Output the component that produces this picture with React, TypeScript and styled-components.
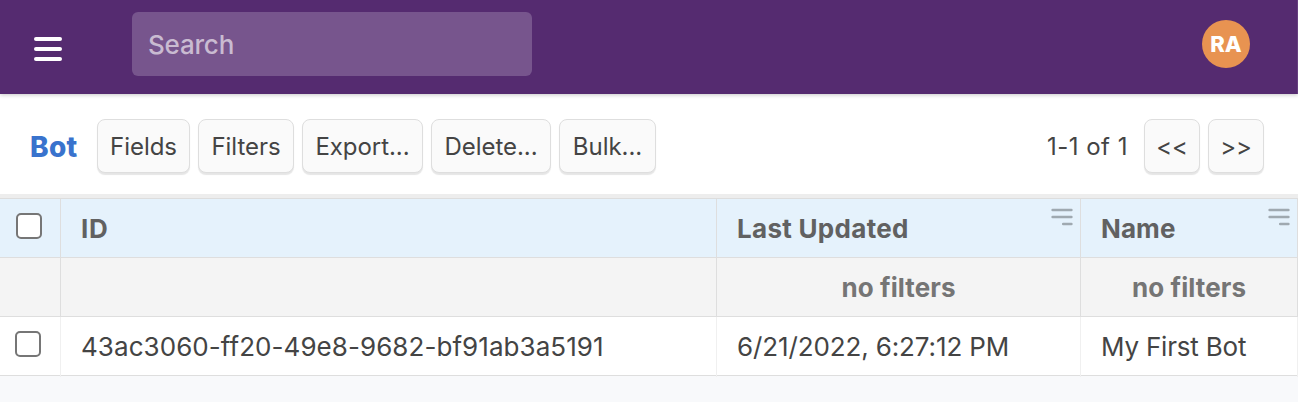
import React from "react";
import styled, { createGlobalStyle } from "styled-components";

const GlobalStyle = createGlobalStyle`
  * { box-sizing: border-box; }
  body {
    margin: 0;
    background: #f8f9fb;
    color: #444;
    font-family: Inter, "Liberation Sans", sans-serif;
    -webkit-font-smoothing: antialiased;
    overflow: hidden;
  }
`;

const Page = styled.div`
  width: 1298px;
  height: 402px;
  display: flex;
  flex-direction: column;
`;

const Header = styled.header`
  height: 94px;
  flex: none;
  display: flex;
  align-items: flex-start;
  background: #552b70;
  border-right: 1px solid #663f7f;
  padding: 12px 47px 0 34px;
  position: relative;
  box-shadow: 0 1px 4px rgba(0, 0, 0, 0.22);
`;

const MenuButton = styled.button`
  width: 28px;
  height: 24px;
  margin: 25px 70px 0 0;
  padding: 0;
  border: 0;
  background: none;
  display: flex;
  flex-direction: column;
  justify-content: space-between;
`;

const MenuBar = styled.span`
  width: 28px;
  height: 4px;
  border-radius: 2px;
  background: #fff;
`;

const SearchInput = styled.input`
  width: 400px;
  height: 64px;
  padding: 0 16px;
  border: 0;
  border-radius: 6px;
  background: #77558d;
  color: #fff;
  font: 450 26px Inter, sans-serif;
  letter-spacing: -0.2px;
  &::placeholder { color: #c9bbd1; opacity: 1; }
`;

const Avatar = styled.div`
  width: 48px;
  height: 48px;
  margin: 8px 0 0 auto;
  border-radius: 50%;
  background: #e89351;
  color: #fff;
  font-size: 22px;
  font-weight: 800;
  line-height: 48px;
  text-align: center;
`;

const Toolbar = styled.div`
  height: 104px;
  flex: none;
  display: flex;
  align-items: flex-start;
  gap: 8px;
  padding: 25px 34px 0 30px;
  background: #fff;
  border-bottom: 4px solid #ededed;
`;

const Title = styled.h1`
  width: 59px;
  margin: 0;
  color: #3973cd;
  font-size: 28px;
  font-weight: 800;
  letter-spacing: 0.3px;
  line-height: 57px;
`;

const ToolButton = styled.button<{ $width: number }>`
  width: ${(p) => p.$width}px;
  height: 54px;
  padding: 1px 0 0;
  border: 1px solid #dedede;
  border-radius: 8px;
  background: #fafafa;
  box-shadow: 0 2px 1px rgba(0, 0, 0, 0.1);
  color: #444;
  font: 430 24px/52px Inter, sans-serif;
  letter-spacing: -0.05px;
  white-space: nowrap;
`;

const PageCount = styled.span`
  margin: 0 8px 0 auto;
  font-size: 24px;
  font-weight: 430;
  letter-spacing: 0.5px;
  line-height: 56px;
`;

const Grid = styled.div`
  border-top: 1px solid #ddd;
`;

const Row = styled.div<{ $kind: "head" | "filter" | "body" }>`
  display: grid;
  grid-template-columns: 61px 656px 364px 217px;
  height: 59px;
  border-bottom: 1px solid #dedede;
  background: ${(p) => ({ head: "#e5f2fc", filter: "#f4f4f4", body: "#fff" })[p.$kind]};
  color: ${(p) => ({ head: "#616161", filter: "#757575", body: "#444" })[p.$kind]};
  font-size: 26px;
  font-weight: ${(p) => (p.$kind === "body" ? 430 : 730)};
  line-height: 60px;
  & > div { border-right: 1px solid ${(p) => (p.$kind === "body" ? "#f0f0f0" : "#dedede")}; }
`;

const Cell = styled.div<{ $center?: boolean; $spacing?: number }>`
  display: flex;
  justify-content: ${(p) => (p.$center ? "center" : "space-between")};
  padding: 0 ${(p) => (p.$center ? 0 : 7)}px 0 ${(p) => (p.$center ? 0 : 20)}px;
  letter-spacing: ${(p) => p.$spacing ?? 0}px;
  white-space: nowrap;
`;

const CheckCell = styled.div<{ $left: number }>`
  padding: 14px 0 0 ${(p) => p.$left}px;
`;

const Checkbox = styled.input.attrs({ type: "checkbox" })`
  appearance: none;
  display: block;
  width: 26px;
  height: 26px;
  margin: 0;
  border: 2px solid #767676;
  border-radius: 5px;
  background: #fff;
`;

const SortLines = styled.svg`
  display: block;
  width: 22px;
  height: 18px;
  margin-top: 9px;
  stroke: #9fa9b0;
  stroke-width: 2.5;
  stroke-linecap: round;
`;

const SortIcon = () => (
  <SortLines viewBox="0 0 22 18">
    <path d="M1.6 2H20.4M1.6 9H20.4M12.2 16H20.4" />
  </SortLines>
);

export default function App() {
  return (
    <Page>
      <GlobalStyle />
      <Header>
        <MenuButton aria-label="Menu">
          <MenuBar />
          <MenuBar />
          <MenuBar />
        </MenuButton>
        <SearchInput placeholder="Search" />
        <Avatar>RA</Avatar>
      </Header>
      <Toolbar>
        <Title>Bot</Title>
        <ToolButton $width={93}>Fields</ToolButton>
        <ToolButton $width={96}>Filters</ToolButton>
        <ToolButton $width={121}>Export...</ToolButton>
        <ToolButton $width={120}>Delete...</ToolButton>
        <ToolButton $width={97}>Bulk...</ToolButton>
        <PageCount>1-1 of 1</PageCount>
        <ToolButton $width={56}>&lt;&lt;</ToolButton>
        <ToolButton $width={56}>&gt;&gt;</ToolButton>
      </Toolbar>
      <Grid>
        <Row $kind="head">
          <CheckCell $left={16}><Checkbox /></CheckCell>
          <Cell $spacing={0.6}>ID</Cell>
          <Cell $spacing={0.3}>Last Updated<SortIcon /></Cell>
          <Cell $spacing={0.1}>Name<SortIcon /></Cell>
        </Row>
        <Row $kind="filter">
          <div />
          <div />
          <Cell $center $spacing={0.1}>no filters</Cell>
          <Cell $center $spacing={0.1}>no filters</Cell>
        </Row>
        <Row $kind="body">
          <CheckCell $left={15}><Checkbox /></CheckCell>
          <Cell $spacing={0.06}>43ac3060-ff20-49e8-9682-bf91ab3a5191</Cell>
          <Cell $spacing={-0.12}>6/21/2022, 6:27:12 PM</Cell>
          <Cell $spacing={-0.2}>My First Bot</Cell>
        </Row>
      </Grid>
    </Page>
  );
}
